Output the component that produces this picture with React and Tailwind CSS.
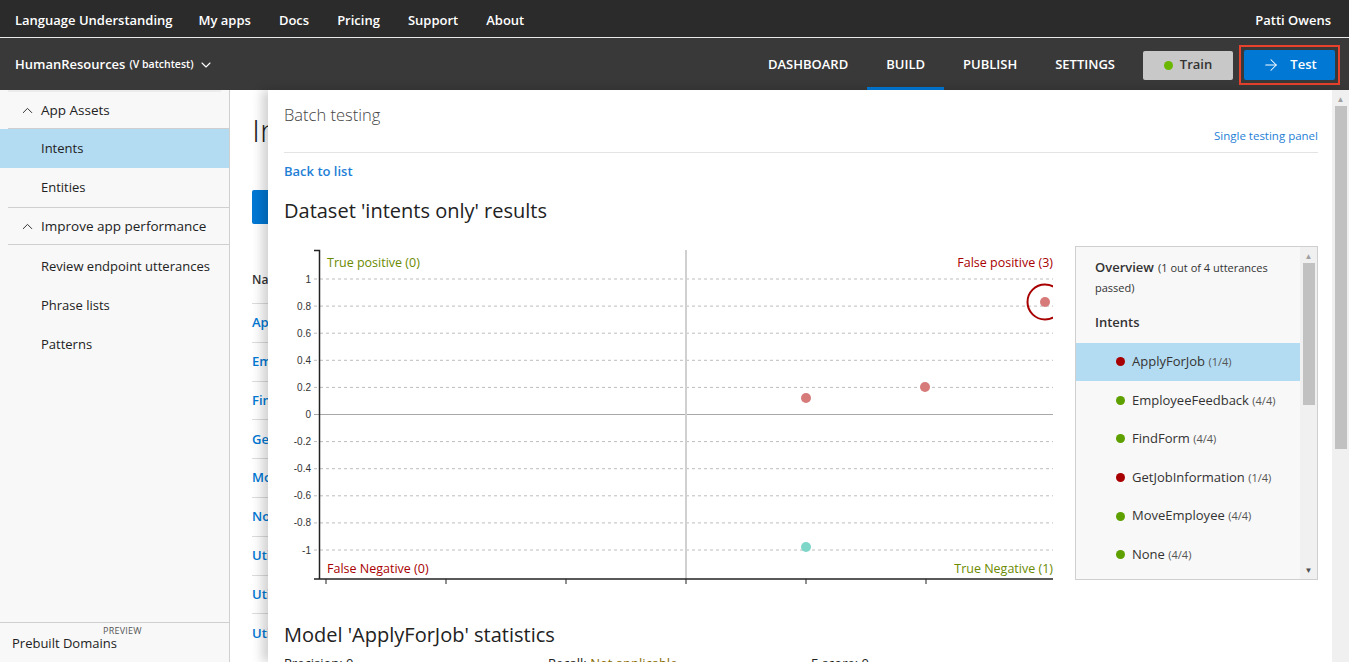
import React from "react";
import { ChevronDown, ChevronUp, ArrowRight } from "lucide-react";

const font = { fontFamily: '"Open Sans", "Noto Sans", sans-serif' };

const topLinks = ["My apps", "Docs", "Pricing", "Support", "About"];
const tabs = [
  { name: "DASHBOARD", active: false },
  { name: "BUILD", active: true },
  { name: "PUBLISH", active: false },
  { name: "SETTINGS", active: false },
];

const intents = [
  { name: "ApplyForJob", score: "1/4", ok: false, selected: true },
  { name: "EmployeeFeedback", score: "4/4", ok: true },
  { name: "FindForm", score: "4/4", ok: true },
  { name: "GetJobInformation", score: "1/4", ok: false },
  { name: "MoveEmployee", score: "4/4", ok: true },
  { name: "None", score: "4/4", ok: true },
];

const bgRows = ["ApplyForJob", "EmployeeFeedback", "FindForm", "GetJobInformation", "MoveEmployee", "None", "Utilities.Cancel", "Utilities.Confirm", "Utilities.Help"];

const yTicks = [1, 0.8, 0.6, 0.4, 0.2, 0, -0.2, -0.4, -0.6, -0.8, -1];
const yPos = (v) => 170.5 - v * 135.5;

function Chart() {
  return (
    <svg width="776" height="344" className="shrink-0">
      <defs>
        <clipPath id="plot">
          <rect x="35" y="0" width="734" height="335" />
        </clipPath>
      </defs>
      {/* grid */}
      {yTicks.map((v) => (
        <g key={v}>
          <line
            x1="30"
            x2="769"
            y1={yPos(v)}
            y2={yPos(v)}
            stroke={v === 0 ? "#a8a8a8" : "#bdbdbd"}
            strokeDasharray={v === 0 ? "" : "3 3"}
          />
          <text x="27" y={yPos(v) + 3.5} fontSize="10" textAnchor="end" fill="#333" fontFamily="Liberation Sans, sans-serif">
            {v === 0 ? "0" : String(v)}
          </text>
        </g>
      ))}
      <line x1="402" x2="402" y1="6" y2="335" stroke="#d0d0d0" strokeWidth="2" />
      {/* axes */}
      <path d="M30 6.5 H35.5 V335" fill="none" stroke="#222" strokeWidth="1.5" />
      <line x1="30" x2="769" y1="335" y2="335" stroke="#222" strokeWidth="1.5" />
      {[42, 162, 282, 402, 522, 642].map((x) => (
        <line key={x} x1={x} x2={x} y1="335" y2="340" stroke="#222" />
      ))}
      {/* points */}
      <g clipPath="url(#plot)">
        <circle cx="761" cy="58" r="17.5" fill="none" stroke="#a80000" strokeWidth="2" />
      </g>
      <circle cx="761" cy="58" r="5" fill="#d67a7a" />
      <circle cx="522" cy="154" r="5" fill="#d67a7a" />
      <circle cx="641" cy="143" r="5" fill="#d67a7a" />
      <circle cx="522" cy="303" r="5" fill="#7dd6c8" />
      {/* quadrant labels */}
      <text x="43" y="23" fontSize="12.5" fill="#6b8a00" style={font}>True positive (0)</text>
      <text x="769" y="23" fontSize="12.5" fill="#a80000" textAnchor="end" style={font}>False positive (3)</text>
      <text x="43" y="329" fontSize="12.5" fill="#a80000" style={font}>False Negative (0)</text>
      <text x="769" y="329" fontSize="12.5" fill="#6b8a00" textAnchor="end" style={font}>True Negative (1)</text>
    </svg>
  );
}

function IntentList() {
  return (
    <div className="w-[243px] h-[334px] border border-[#cfcfcf] bg-[#f8f8f8] flex overflow-hidden">
      <div className="flex-1 pt-[10px]">
        <div className="pl-[19px] pr-2 leading-[18px]">
          <span className="text-[13px] font-semibold text-[#333]">Overview</span>{" "}
          <span className="text-[11px] text-[#333]">(1 out of 4 utterances passed)</span>
        </div>
        <div className="pl-[19px] mt-[16px] mb-[10px] text-[13px] font-semibold text-[#333]">Intents</div>
        {intents.map((it) => (
          <div
            key={it.name}
            className={`h-[38.6px] flex items-center pl-[40px] gap-[7px] ${it.selected ? "bg-[#b3dcf2]" : ""}`}
          >
            <span className={`w-[9px] h-[9px] rounded-full ${it.ok ? "bg-[#5ea000]" : "bg-[#a80000]"}`} />
            <span className="text-[13px] text-[#333]">
              {it.name} <span className="text-[11px] text-[#555]">({it.score})</span>
            </span>
          </div>
        ))}
      </div>
      <div className="w-[17px] bg-[#f0f0f0] flex flex-col items-center">
        <div className="text-[8px] text-[#a0a0a0] leading-[14px] mt-[2px]">▲</div>
        <div className="w-[12px] h-[142px] bg-[#c1c1c1]" />
        <div className="flex-1" />
        <div className="text-[8px] text-[#505050] leading-[14px] mb-[2px]">▼</div>
      </div>
    </div>
  );
}

function Sidebar() {
  const Item = ({ children, active }) => (
    <div className={`h-[39px] flex items-center pl-[41px] text-[13px] text-[#222] ${active ? "bg-[#b3dcf2]" : ""}`}>
      {children}
    </div>
  );
  const Header = ({ children }) => (
    <div className="h-[37px] flex items-center gap-[5px] text-[13.5px] text-[#222] border-b border-[#cfcfcf] ml-[8px] pl-[11px]">
      <ChevronUp size={17} strokeWidth={1.3} />
      {children}
    </div>
  );
  return (
    <div className="w-[230px] shrink-0 bg-[#f8f8f8] border-r border-[#d0d0d0] flex flex-col">
      <div className="h-[2px] bg-[#ececec] mx-[8px]" />
      <Header>App Assets</Header>
      <Item active>Intents</Item>
      <Item>Entities</Item>
      <div className="border-t border-[#d0d0d0] ml-[8px]" />
      <Header>Improve app performance</Header>
      <div className="h-[2px]" />
      <Item>Review endpoint utterances</Item>
      <Item>Phrase lists</Item>
      <Item>Patterns</Item>
      <div className="flex-1" />
      <div className="h-[40px] border-t border-[#d0d0d0] relative">
        <div className="absolute left-[103px] top-[1px] text-[9px] text-[#555] tracking-wide">PREVIEW</div>
        <div className="pt-[11px] pl-[12px] text-[13px] text-[#222]">Prebuilt Domains</div>
      </div>
    </div>
  );
}

export default function App() {
  return (
    <div className="w-[1349px] h-[662px] overflow-hidden flex flex-col bg-white" style={font}>
      {/* top bar */}
      <div className="h-[37px] bg-[#2b2b2b] flex items-center pt-[4px] px-[15px] text-white text-[13px] font-semibold shrink-0">
        <span className="mr-[26px]">Language Understanding</span>
        {topLinks.map((l) => (
          <span key={l} className="mr-[28px]">{l}</span>
        ))}
        <span className="ml-auto mr-[3px]">Patti Owens</span>
      </div>
      <div className="h-[1px] bg-[#e8e8e8] shrink-0" />
      {/* app bar */}
      <div className="h-[52px] bg-[#393939] flex items-center pl-[15px] pr-[9px] pt-[2px] text-white shrink-0">
        <span className="text-[13px] font-semibold">HumanResources</span>
        <span className="text-[10.5px] font-semibold ml-[4px]">(V batchtest)</span>
        <ChevronDown size={16} strokeWidth={1.6} className="ml-[4px]" />
        <div className="ml-auto flex items-stretch h-[50px]">
          {tabs.map((t) => (
            <div
              key={t.name}
              className={`flex items-center pt-[3px] px-[19px] text-[13px] font-semibold border-b-[3px] ${t.active ? "border-[#0078d4]" : "border-transparent"}`}
            >
              {t.name}
            </div>
          ))}
        </div>
        <div className="ml-[9px] w-[90px] h-[29px] bg-[#c8c8c8] rounded-[2px] flex items-center justify-center gap-[7px] text-[13px] font-semibold text-[#333]">
          <span className="w-[9px] h-[9px] rounded-full bg-[#6bb700]" />
          Train
        </div>
        <div className="ml-[6px] border-2 border-[#e8412c] p-[3px]">
          <div className="w-[91px] h-[30px] bg-[#0078d4] rounded-[2px] flex items-center justify-center gap-[10px] text-[13px] font-semibold text-white">
            <ArrowRight size={18} strokeWidth={1.4} />
            Test
          </div>
        </div>
      </div>
      {/* body */}
      <div className="flex-1 flex min-h-0">
        <Sidebar />
        {/* page underneath, only a strip shows */}
        <div className="w-[38px] shrink-0 overflow-hidden">
          <div className="pl-[22px] pt-[18px] w-[400px]">
            <div className="text-[32px] font-light text-[#222] leading-[44px]">Intents</div>
            <div className="mt-[38px] w-[140px] h-[34px] bg-[#0078d4] rounded-[2px]" />
            <div className="mt-[46px] text-[12px] font-semibold text-[#333] h-[20px] leading-[20px]">Name</div>
            <div className="mt-[13px] w-[300px]">
              {bgRows.map((r) => (
                <div key={r} className="h-[38.8px] border-t border-[#dcdcdc] flex items-center text-[13px] font-semibold text-[#0078d4]">
                  {r}
                </div>
              ))}
            </div>
          </div>
        </div>
        {/* batch testing panel */}
        <div className="flex-1 relative bg-white shadow-[-6px_0_10px_rgba(0,0,0,0.18)] flex min-w-0">
          <div className="flex-1 pl-[16px] pr-[14px] overflow-hidden">
            <div className="pt-[14px] text-[16.5px] font-light text-[#444] leading-[22px]">Batch testing</div>
            <div className="flex justify-end text-[11.5px] text-[#1f7fd6] mt-[2px] leading-[16px]">Single testing panel</div>
            <div className="h-[1px] bg-[#e3e3e3] mt-[8px]" />
            <div className="mt-[9px] text-[13px] font-semibold text-[#1f7fd6] leading-[18px]">Back to list</div>
            <div className="mt-[18px] text-[20px] text-[#222] leading-[26px]">Dataset 'intents only' results</div>
            <div className="mt-[20px] flex items-start gap-[15px]">
              <Chart />
              <div className="mt-[2px]">
                <IntentList />
              </div>
            </div>
            <div className="mt-[34px] text-[20px] text-[#222] leading-[26px]">Model 'ApplyForJob' statistics</div>
            <div className="mt-[6px] flex text-[13px] text-[#222]">
              <span className="w-[264px]">Precision: 0</span>
              <span className="w-[263px]">Recall: <span className="text-[#8a6d00]">Not applicable</span></span>
              <span>F-score: 0</span>
            </div>
          </div>
          <div className="w-[17px] bg-[#f0f0f0] flex flex-col items-center shrink-0">
            <div className="text-[8px] text-[#a0a0a0] leading-[14px] mt-[2px]">▲</div>
            <div className="w-[12px] h-[343px] bg-[#c1c1c1]" />
          </div>
        </div>
      </div>
    </div>
  );
}
